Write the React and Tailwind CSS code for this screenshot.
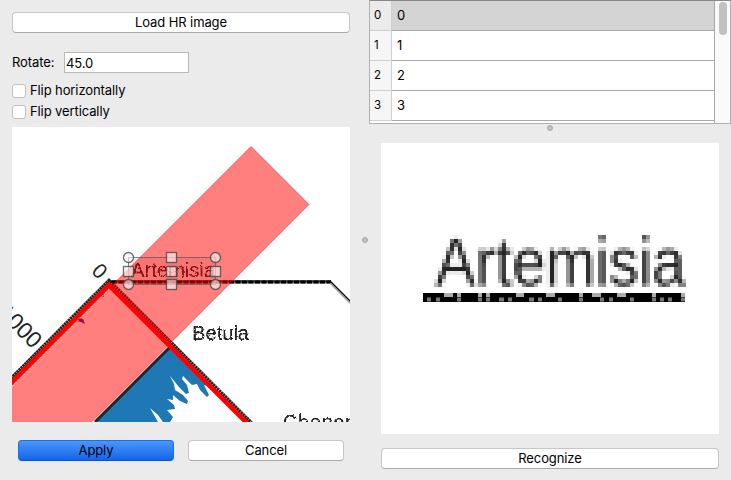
import React from "react";

function Button({ children, primary = false, className = "" }) {
  const tone = primary
    ? "border-[#1a6ef0] border-b-[#0b4fd2] bg-linear-to-b from-[#4a96fb] to-[#1265e8]"
    : "border-[#c6c6c6] border-b-[#a9a9a9] bg-white";
  return (
    <button className={`flex h-[21px] items-center justify-center rounded-[4px] border text-[13px] leading-none tracking-[-0.1px] text-black ${tone} ${className}`}>
      {children}
    </button>
  );
}

function Check({ label }) {
  return (
    <label className="flex h-[21px] items-center gap-1">
      <span className="size-[14px] rounded-[3px] border border-[#c0c0c0] bg-white" />
      <span>{label}</span>
    </label>
  );
}

function Row({ n, selected = false }) {
  return (
    <div className="flex h-[30px] shrink-0">
      <div className={`flex w-[22px] items-center border-r border-b border-[#d0d0d0] pl-1 text-[11.5px] ${selected ? "bg-[#ebebeb]" : "bg-[#f6f6f6]"}`}>{n}</div>
      <div className={`flex flex-1 items-center border-b border-[#a8a8a8] pl-[5px] ${selected ? "bg-[#d4d4d4]" : "bg-white"}`}>{n}</div>
    </div>
  );
}

const handles = [
  [171.5, 257.5],
  [128.5, 271.5],
  [171.5, 271.5],
  [215.5, 271.5],
  [171.5, 284.5],
];
const corners = [
  [128.5, 257.5],
  [215.5, 257.5],
  [128.5, 284.5],
  [215.5, 284.5],
];

function Diagram() {
  return (
    <svg className="block h-[295px] w-[338px] bg-white" viewBox="12 127 338 295" fontFamily="'Liberation Sans', Arial, sans-serif" fill="#222">
      <defs>
        <filter id="aliased" colorInterpolationFilters="sRGB">
          <feTurbulence type="fractalNoise" baseFrequency="0.45" seed="4" result="noise" />
          <feDisplacementMap in="SourceGraphic" in2="noise" scale="3" xChannelSelector="R" yChannelSelector="G" />
          <feComponentTransfer>
            <feFuncA type="discrete" tableValues="0 0.35 0.8 1" />
          </feComponentTransfer>
        </filter>
      </defs>
      <g filter="url(#aliased)">
        <text x="131" y="277" fontSize="20" textLength="84" lengthAdjust="spacingAndGlyphs">Artemisia</text>
        <text x="192" y="340" fontSize="20.5" textLength="57" lengthAdjust="spacingAndGlyphs">Betula</text>
        <text x="283" y="428.5" fontSize="20" letterSpacing="0.6">Chenopodium</text>
      </g>
      <text transform="translate(90.5 272) rotate(45)" fontSize="21">0</text>
      <text transform="translate(32.5 349.5) rotate(45)" fontSize="23" textAnchor="end">1000</text>
      <g fill="none" stroke="#000">
        <path d="M109 282H331" stroke="#666" strokeWidth="3" />
        <path d="M109 281H331" strokeWidth="1" />
        <path d="M112 282H331" strokeWidth="3" strokeDasharray="5 1.5" />
        <path d="M330 281L351 302" strokeWidth="1.5" />
        <path d="M330 283L351 304" stroke="#999" strokeWidth="1.3" />
      </g>
      <path fill="#1f77b4" d="M170 347L210 387L204 385L206 389L209 395L207 397L200 390L197 384L192 385L187 380L183 376L182 379L187 385L189 393L186 394L179 387L170 376L174 384L175 390L183 395L188 401L187 404L180 401L173 395L173 400L167 399L174 405L175 409L167 410L173 417L170 422H163L158 415L150 408L158 422H95Z" />
      <path d="M171 346L95 422" fill="none" stroke="#252525" strokeWidth="3" />
      <path d="M11 378.500L109 280.500L251.500 423" fill="none" stroke="#222" strokeWidth="3.5" strokeDasharray="2.4 .4" />
      <path d="M76 321l4-3 3 1 2 5-4-2zM100 295l4-1 0 3z" fill="#222288" />
      <path d="M251 146.500L309 204.500L90 423.500H12V385.500Z" fill="#f00" fillOpacity=".5" />
      <path d="M12 385.500L251 146.500L309 204.500L90 423.500" fill="none" stroke="#f00" strokeOpacity=".5" />
      <path d="M10 384L109 285L247 423" fill="none" stroke="#f00" strokeWidth="4.8" />
      <path d="M12 386.500L109 289.500" fill="none" stroke="#fff" strokeWidth=".8" strokeDasharray="2 2" />
      <rect x="128.500" y="257.500" width="87" height="27" fill="#800" fillOpacity=".08" stroke="#555" strokeOpacity=".7" />
      <g fill="#fff" fillOpacity=".6" stroke="#444" strokeOpacity=".8" strokeWidth="1.3">
        {handles.map(([x, y]) => <rect key={`${x}-${y}`} x={x - 5} y={y - 5} width="10" height="10" />)}
        {corners.map(([x, y]) => <circle key={`${x}-${y}`} cx={x} cy={y} r="5" />)}
      </g>
    </svg>
  );
}

function Preview() {
  return (
    <svg className="block h-[291px] w-[338px] bg-white" viewBox="381 143 338 291">
      <defs>
        {/* Samples one pixel per 4px cell, then doubles it twice along each axis. */}
        <filter id="mosaic" filterUnits="userSpaceOnUse" x="421" y="222" width="272" height="84" colorInterpolationFilters="sRGB">
          <feGaussianBlur in="SourceGraphic" stdDeviation="1" result="soft" />
          <feFlood x="422" y="223" width="1" height="1" floodColor="#000" />
          <feComposite x="421" y="222" width="4" height="4" />
          <feTile result="grid" />
          <feComposite in="soft" in2="grid" operator="in" result="p" />
          <feOffset in="p" dx="1" dy="0" result="p1" />
          <feComposite in="p" in2="p1" operator="arithmetic" k2="1" k3="1" result="w2" />
          <feOffset in="w2" dx="2" dy="0" result="w2b" />
          <feComposite in="w2" in2="w2b" operator="arithmetic" k2="1" k3="1" result="w4" />
          <feOffset in="w4" dx="0" dy="1" result="w4b" />
          <feComposite in="w4" in2="w4b" operator="arithmetic" k2="1" k3="1" result="h2" />
          <feOffset in="h2" dx="0" dy="2" result="h2b" />
          <feComposite in="h2" in2="h2b" operator="arithmetic" k2="1" k3="1" />
        </filter>
      </defs>
      <text x="434" y="284" fontSize="68" textLength="250" lengthAdjust="spacingAndGlyphs" fontFamily="'Liberation Sans', Arial, sans-serif" fill="#222" filter="url(#mosaic)">Artemisia</text>
      <path d="M423 297.500H685" stroke="#000" strokeWidth="9" />
      <path d="M444 295h9M457 295h4M478 295h4M486 295h4M516 295h8M546 295h9M579 295h4M592 295h9M617 295h9M652 295h4M681 295h4" stroke="#aaa" strokeWidth="4" />
      <path d="M427 299.500h4M436 299.500h4M457 299.500h4M478 299.500h4M486 299.500h4M499 299.500h5M508 299.500h4M529 299.500h5M538 299.500h4M558 299.500h4M579 299.500h4M600 299.500h4M609 299.500h4M630 299.500h4M652 299.500h4M660 299.500h4M668 299.500h4M681 299.500h4" stroke="#777" strokeWidth="4" />
    </svg>
  );
}

export default function App() {
  return (
    <main className="flex h-[480px] w-[731px] overflow-hidden bg-[#ebebeb] font-['Inter','Liberation_Sans',sans-serif] text-[13px] leading-none tracking-[-0.1px] text-black">
      <section className="flex w-[361px] shrink-0 flex-col pt-3 pl-3">
        <Button className="w-[338px]">Load HR image</Button>
        <div className="mt-[19px] flex h-[21px] items-center gap-2">
          <span className="w-11">Rotate:</span>
          <input className="h-[21px] w-[125px] border border-[#b8b8b8] bg-white px-px pt-px" defaultValue="45.0" />
        </div>
        <div className="mt-[7px] mb-[5px]">
          <Check label="Flip horizontally" />
          <Check label="Flip vertically" />
        </div>
        <Diagram />
        <div className="mt-[18px] flex gap-[14px] pl-[6px]">
          <Button primary className="w-[156px]">Apply</Button>
          <Button className="w-[156px]">Cancel</Button>
        </div>
      </section>
      <div className="flex w-2 shrink-0 items-center justify-center">
        <i className="size-[6px] shrink-0 rounded-full border border-[#aaa] bg-[#c0c0c0]" />
      </div>
      <section className="flex w-[362px] shrink-0 flex-col">
        <div className="flex h-[124px] w-[362px] border border-t-[#888] border-[#b0b0b0] bg-white">
          <div className="flex flex-1 flex-col overflow-hidden border-r border-[#a8a8a8]">
            <Row n="0" selected />
            <Row n="1" />
            <Row n="2" />
            <Row n="3" />
          </div>
          <div className="flex w-[15px] justify-center bg-[#fafafa] pt-px">
            <div className="h-[33px] w-2 rounded-full bg-[#c1c1c1]" />
          </div>
        </div>
        <div className="flex h-[19px] justify-center pt-px">
          <i className="size-[6px] rounded-full border border-[#aaa] bg-[#c0c0c0]" />
        </div>
        <div className="flex flex-col gap-[14px] pl-3">
          <Preview />
          <Button className="w-[338px]">Recognize</Button>
        </div>
      </section>
    </main>
  );
}
